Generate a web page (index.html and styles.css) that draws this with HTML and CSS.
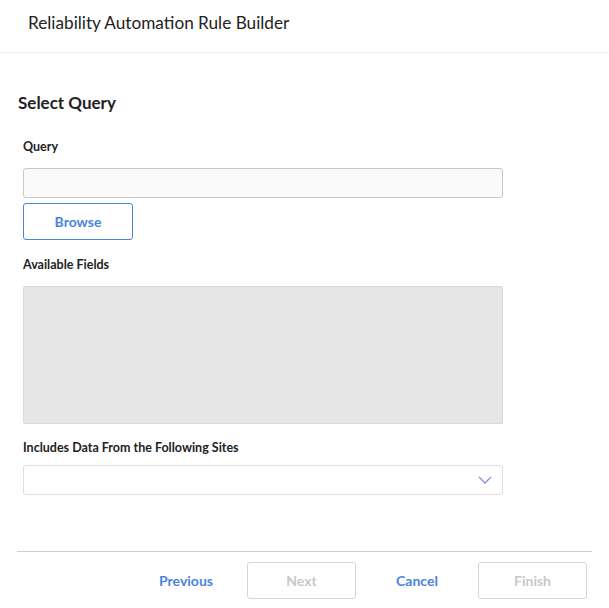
FILE: index.html
```html
<!DOCTYPE html>
<html>
<head>
<meta charset="utf-8">
<link rel="stylesheet" href="styles.css">
</head>
<body>
<div class="page">
  <header class="header"><h1 class="title">Reliability Automation Rule Builder</h1></header>
  <main class="main">
    <h2 class="section">Select Query</h2>
    <div class="fields">
      <label class="label label-query">Query</label>
      <div class="input"></div>
      <button class="btn btn-outline">Browse</button>
      <label class="label label-fields">Available Fields</label>
      <div class="fieldbox"></div>
      <label class="label label-sites">Includes Data From the Following Sites</label>
      <div class="select">
        <svg class="chev" width="14" height="8" viewBox="0 0 14 8"><path d="M1 1 L7 7 L13 1" fill="none" stroke="#7b8fe6" stroke-width="1.3"/></svg>
      </div>
    </div>
  </main>
  <footer class="footer">
    <button class="btn btn-link">Previous</button>
    <button class="btn btn-disabled">Next</button>
    <button class="btn btn-link">Cancel</button>
    <button class="btn btn-disabled">Finish</button>
  </footer>
</div>
</body>
</html>
```
FILE: styles.css
```css
* { box-sizing: border-box; }
html, body { margin: 0; padding: 0; background: #fff; }
body { font-family: Lato, "Noto Sans", sans-serif; color: #222; width: 609px; height: 608px; overflow: hidden; }
.header { height: 53px; border-bottom: 1px solid #e8ecee; display: flex; align-items: center; padding-left: 28px; padding-bottom: 7px; }
.title { margin: 0; font-size: 17.2px; font-weight: 400; color: #222; }
.main { padding: 39px 18px 0; height: 498px; }
.section { margin: 0; font-size: 17px; font-weight: 700; line-height: 22px; color: #222; }
.fields { padding-left: 5px; display: flex; flex-direction: column; align-items: flex-start; }
.label { font-size: 12.5px; font-weight: 700; line-height: 16px; color: #222; }
.label-query { margin-top: 25px; }
.input { margin-top: 13px; width: 480px; height: 30px; background: #fafafa; border: 1px solid #c8c8c8; border-radius: 3px; }
.btn { font-family: inherit; font-size: 14px; font-weight: 700; height: 37px; width: 109px; border-radius: 3px; background: #fff; cursor: pointer; padding: 0; }
.btn-outline { margin-top: 5px; width: 110px; border: 1px solid #4a84e0; color: #4a84e0; }
.label-fields { margin-top: 17px; }
.fieldbox { margin-top: 13px; width: 480px; height: 138px; background: #e6e6e6; border: 1px solid #dadada; border-radius: 2px; }
.label-sites { margin-top: 16px; }
.select { margin-top: 9px; width: 480px; height: 30px; border: 1px solid #dedede; border-radius: 3px; display: flex; align-items: center; justify-content: flex-end; padding-right: 10px; }
.footer { margin: 0 17px; border-top: 1px solid #cfcfcf; padding: 10px 5px 0 0; display: flex; justify-content: flex-end; gap: 6.5px; }
.btn-link { border: none; color: #4a84e0; }
.btn-disabled { border: 1px solid #d6d6d6; color: #c8c8c8; }
```
